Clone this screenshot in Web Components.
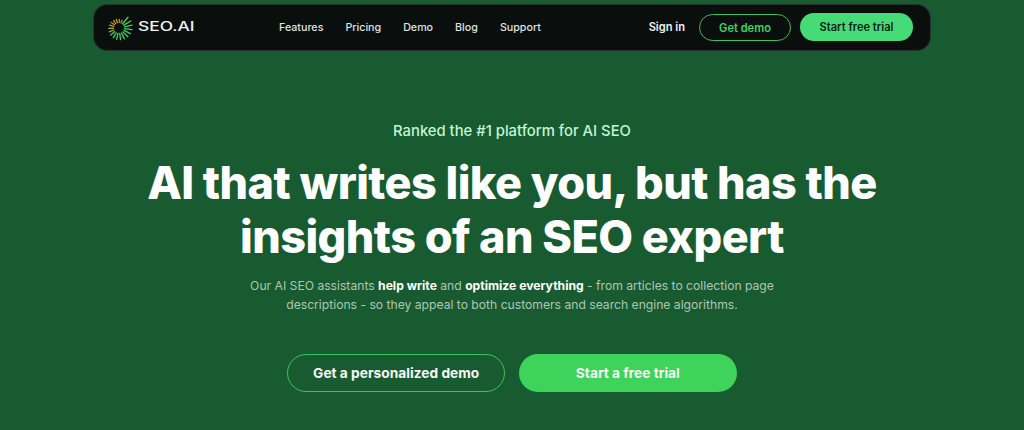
<!DOCTYPE html>
<html lang="en"><head><meta charset="utf-8"><title>SEO.AI</title>
<style>
html,body{margin:0;height:430px;overflow:hidden;background:#195b30;font-family:Inter,"Liberation Sans",sans-serif}
</style></head><body>
<seo-page>
  <seo-nav slot="nav"></seo-nav>
  <seo-hero slot="hero"></seo-hero>
</seo-page>
<template id="t-page"><style>
:host{display:flex;flex-direction:column;align-items:center;height:430px;padding-top:4px;box-sizing:border-box}
</style><slot name="nav"></slot><slot name="hero"></slot></template>

<template id="t-nav"><style>
:host{display:flex;align-items:center;box-sizing:border-box;width:838px;height:47px;background:#0a0f0d;border:1px solid #28332d;border-radius:14px;padding:0 17px 0 10px;flex:none}
.logo{display:flex;align-items:center;gap:4px;width:175px}
.word{display:inline-block;font:500 12.4px/1 Inter,sans-serif;color:#f2f4f3;transform:scaleX(1.4);transform-origin:left}
nav{display:flex;gap:22px;font-size:10.7px;font-weight:500;color:#dfe2e0}
.right{margin-left:auto;display:flex;align-items:center;font-size:11.1px;font-weight:600}
.sign{color:#f1f3f2;margin-right:14px;position:relative;top:-1px}
.btn{box-sizing:border-box;display:flex;align-items:center;justify-content:center;border-radius:14px;height:27px}
.ghost{width:92px;border:1px solid #3cc25c;color:#41d363;margin-right:9px}
.fill{width:113px;height:28px;background:#45dc78;color:#0a1a12;position:relative;top:-.5px}
</style>
<div class="logo"><svg width="30" height="30" viewBox="0 0 30 30" aria-hidden="true" id="sun"></svg><span class="word">SEO.AI</span></div>
<nav><span>Features</span><span>Pricing</span><span>Demo</span><span>Blog</span><span>Support</span></nav>
<div class="right"><span class="sign">Sign in</span><span class="btn ghost">Get demo</span><span class="btn fill">Start free trial</span></div>
</template>

<template id="t-hero"><style>
:host{display:flex;flex-direction:column;align-items:center;width:100%;color:#fff;text-align:center}
.eyebrow{margin-top:72px;font-size:14.8px;line-height:17px;font-weight:500;color:#c3f5d2}
h1{margin:16px 0 0;font-size:45px;line-height:53.5px;font-weight:800;letter-spacing:-.57px;width:800px}
p{margin:12.5px 0 0;font-size:12.15px;line-height:19.5px;color:#aec6b6;width:540px}
p span{display:block}
b{color:#fff;font-weight:700}
.cta{display:flex;gap:13.33px;margin-top:39px}
.c{box-sizing:border-box;width:218.33px;height:38px;border-radius:19px;display:flex;align-items:center;justify-content:center;font-size:13.75px;font-weight:700;color:#f4f7f5}
.o{border:1px solid #3cc25c}
.g{background:#3ed35a}
</style>
<div class="eyebrow">Ranked the #1 platform for AI SEO</div>
<h1>AI that writes like you, but has the insights of an SEO expert</h1>
<p><span>Our AI SEO assistants <b>help write</b> and <b>optimize everything</b> - from articles to collection page</span><span>descriptions - so they appeal to both customers and search engine algorithms.</span></p>
<div class="cta"><span class="c o">Get a personalized demo</span><span class="c g">Start a free trial</span></div>
</template>
<script>
function def(name,tid,init){customElements.define(name,class extends HTMLElement{constructor(){super();const r=this.attachShadow({mode:"open"});r.appendChild(document.getElementById(tid).content.cloneNode(true));if(init)init(r)}})}
def("seo-page","t-page");
def("seo-hero","t-hero");
def("seo-nav","t-nav",r=>{
  const s=r.getElementById("sun");let h="";const n=19;
  for(let i=0;i<n;i++){
    const t=i/n, a=(t*360-50)*Math.PI/180;
    const col=t<.55?"#3fd463":t<.68?"#8fb23c":"#c98f2c";
    const out=14-6*t;
    const x1=15+5.5*Math.cos(a),y1=15+5.5*Math.sin(a),x2=15+out*Math.cos(a),y2=15+out*Math.sin(a);
    h+=`<line x1="${x1.toFixed(2)}" y1="${y1.toFixed(2)}" x2="${x2.toFixed(2)}" y2="${y2.toFixed(2)}" stroke="${col}" stroke-width="1.3" stroke-linecap="round"/>`;
  }
  s.innerHTML=h;
});
</script>
</body></html>
